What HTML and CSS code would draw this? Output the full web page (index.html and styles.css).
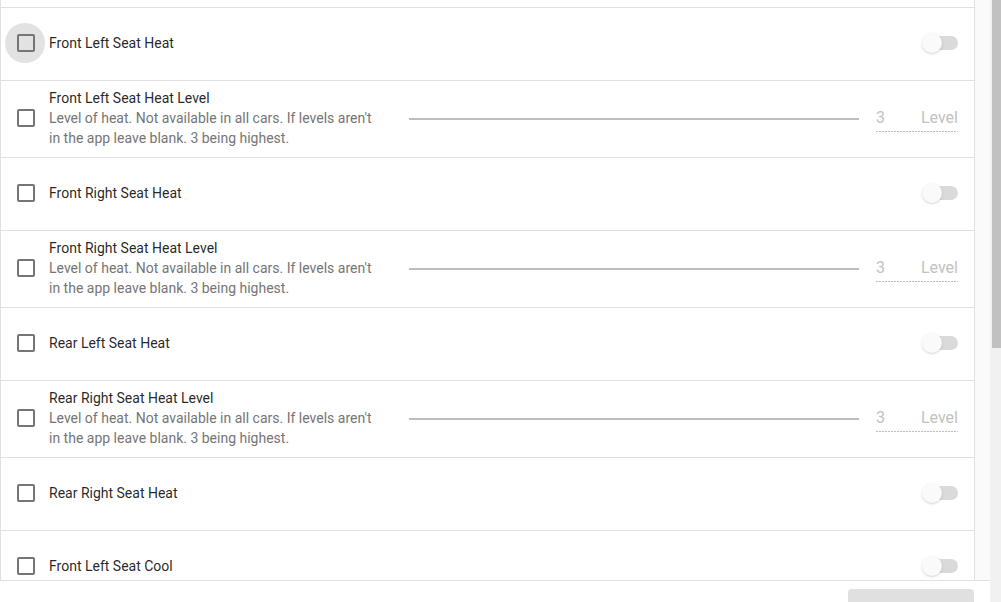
FILE: index.html
```html
<!DOCTYPE html>
<html>
<head>
<meta charset="utf-8">
<link rel="stylesheet" href="styles.css">
</head>
<body>
<div class="app">
  <div class="main">
    <div class="pane">
      <div class="card">
        <div class="stub"></div>

        <div class="row">
          <div class="cb-wrap focused"><span class="cb"></span></div>
          <div class="label">Front Left Seat Heat</div>
          <div class="toggle"><span class="track"></span><span class="thumb"></span></div>
        </div>

        <div class="row level">
          <div class="cb-wrap"><span class="cb"></span></div>
          <div class="text">
            <div class="title">Front Left Seat Heat Level</div>
            <div class="desc">Level of heat. Not available in all cars. If levels aren't in the app leave blank. 3 being highest.</div>
          </div>
          <div class="slider"><span class="rail"></span></div>
          <div class="field"><span class="val">3</span><span class="suffix">Level</span></div>
        </div>

        <div class="row">
          <div class="cb-wrap"><span class="cb"></span></div>
          <div class="label">Front Right Seat Heat</div>
          <div class="toggle"><span class="track"></span><span class="thumb"></span></div>
        </div>

        <div class="row level">
          <div class="cb-wrap"><span class="cb"></span></div>
          <div class="text">
            <div class="title">Front Right Seat Heat Level</div>
            <div class="desc">Level of heat. Not available in all cars. If levels aren't in the app leave blank. 3 being highest.</div>
          </div>
          <div class="slider"><span class="rail"></span></div>
          <div class="field"><span class="val">3</span><span class="suffix">Level</span></div>
        </div>

        <div class="row">
          <div class="cb-wrap"><span class="cb"></span></div>
          <div class="label">Rear Left Seat Heat</div>
          <div class="toggle"><span class="track"></span><span class="thumb"></span></div>
        </div>

        <div class="row level">
          <div class="cb-wrap"><span class="cb"></span></div>
          <div class="text">
            <div class="title">Rear Right Seat Heat Level</div>
            <div class="desc">Level of heat. Not available in all cars. If levels aren't in the app leave blank. 3 being highest.</div>
          </div>
          <div class="slider"><span class="rail"></span></div>
          <div class="field"><span class="val">3</span><span class="suffix">Level</span></div>
        </div>

        <div class="row">
          <div class="cb-wrap"><span class="cb"></span></div>
          <div class="label">Rear Right Seat Heat</div>
          <div class="toggle"><span class="track"></span><span class="thumb"></span></div>
        </div>

        <div class="row">
          <div class="cb-wrap"><span class="cb"></span></div>
          <div class="label">Front Left Seat Cool</div>
          <div class="toggle"><span class="track"></span><span class="thumb"></span></div>
        </div>
      </div>
    </div>
    <div class="footer">
      <div class="btn"></div>
    </div>
  </div>
  <div class="scrollbar"><div class="sb-thumb"></div></div>
</div>
</body>
</html>
```

FILE: styles.css
```css
html, body {
  margin: 0;
  padding: 0;
}
body {
  font-family: Roboto, "Noto Sans", "Liberation Sans", sans-serif;
  font-size: 14px;
  color: rgba(0, 0, 0, 0.87);
  width: 1001px;
  height: 602px;
  overflow: hidden;
  background: #fff;
}
.app {
  display: flex;
  height: 602px;
}
.main {
  width: 990px;
  display: flex;
  flex-direction: column;
}
.pane {
  flex: none;
  height: 580px;
  background: #fafafa;
  overflow: hidden;
  padding-right: 15px;
}
.card {
  background: #fff;
  border-left: 1px solid #e0e0e0;
  border-right: 1px solid #e0e0e0;
}
.stub {
  height: 7px;
  border-bottom: 1px solid #e0e0e0;
}
.row {
  display: flex;
  align-items: center;
  height: 70px;
  border-bottom: 1px solid #e0e0e0;
  padding: 0 16px 2px 4px;
}
.row.level {
  height: 74px;
}
.cb-wrap {
  width: 40px;
  height: 40px;
  border-radius: 50%;
  display: flex;
  align-items: center;
  justify-content: center;
  flex: none;
  margin-right: 4px;
}
.cb-wrap.focused {
  background: #e2e2e2;
}
.cb {
  width: 14px;
  height: 14px;
  border: 2px solid #757575;
  border-radius: 2px;
  margin-left: 2px;
}
.label {
  flex: 1;
  line-height: 20px;
}
.text {
  width: 330px;
  flex: none;
  line-height: 20px;
}
.desc {
  color: #757575;
}
.slider {
  flex: 1;
  margin: 0 17px 0 30px;
  display: flex;
  align-items: center;
}
.rail {
  display: block;
  height: 2px;
  width: 100%;
  background: #bdbdbd;
  margin-top: 1px;
}
.field {
  width: 82px;
  flex: none;
  display: flex;
  justify-content: space-between;
  font-size: 16px;
  line-height: 20px;
  color: #c2c2c2;
  padding-bottom: 4px;
  margin-top: 4px;
  background-image: linear-gradient(to right, #bdbdbd 60%, transparent 0%);
  background-size: 3px 1px;
  background-repeat: repeat-x;
  background-position: bottom left;
}
.toggle {
  position: relative;
  width: 36px;
  height: 20px;
  flex: none;
}
.track {
  position: absolute;
  left: 2px;
  top: 3px;
  width: 34px;
  height: 14px;
  border-radius: 7px;
  background: #dadada;
}
.thumb {
  position: absolute;
  left: 0;
  top: 0;
  width: 20px;
  height: 20px;
  border-radius: 50%;
  background: #fafafa;
  box-shadow: 0 1px 3px rgba(0, 0, 0, 0.12), 0 1px 1px rgba(0, 0, 0, 0.06);
}
.footer {
  flex: 1;
  border-top: 1px solid #e0e0e0;
  background: #fff;
  display: flex;
  justify-content: flex-end;
  padding: 8px 16px 0 0;
}
.btn {
  width: 126px;
  height: 36px;
  border-radius: 4px;
  background: #e0e0e0;
}
.scrollbar {
  width: 11px;
  background: #f1f1f1;
  display: flex;
  justify-content: flex-end;
}
.sb-thumb {
  width: 9px;
  height: 348px;
  background: #c1c1c1;
}
```
